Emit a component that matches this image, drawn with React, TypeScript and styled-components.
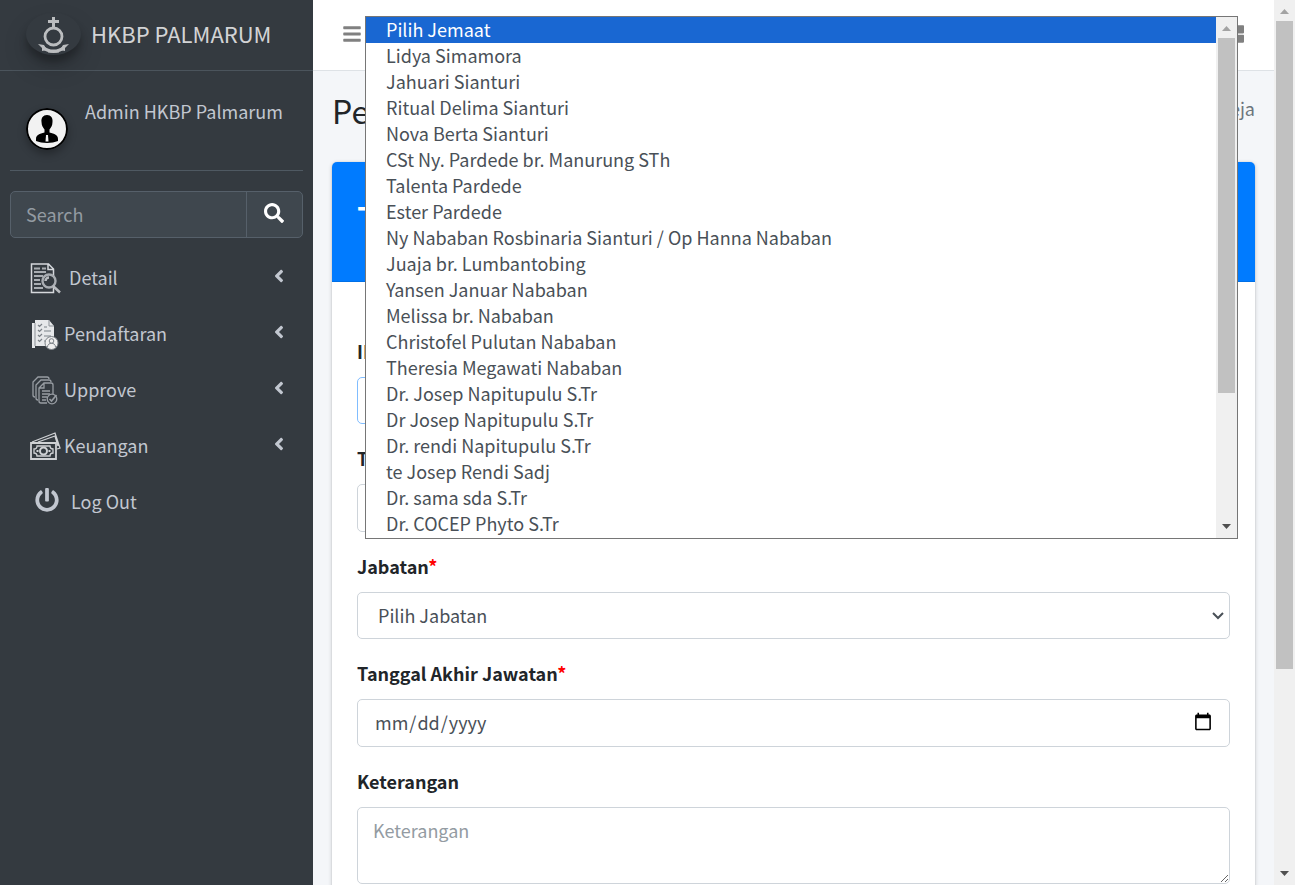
import React from "react";
import styled, { createGlobalStyle } from "styled-components";
import { FaSearch, FaPowerOff, FaBars, FaThLarge, FaAngleLeft } from "react-icons/fa";

const Global = createGlobalStyle`
  *, *::before, *::after { box-sizing: border-box; }
  body { margin: 0; overflow: hidden; }
  body, input, select, textarea, button {
    font-family: "Noto Sans CJK SC", "Noto Sans", sans-serif;
    font-size: 18px;
    line-height: 28px;
    color: #212529;
  }
`;

const Shell = styled.div`
  display: grid;
  grid-template-columns: 313px minmax(0, 1fr) 21px;
  grid-template-rows: minmax(0, 1fr);
  height: 100vh;
  overflow: hidden;
`;

const Sidebar = styled.aside`
  background: #343a40;
  color: #c2c7d0;
`;

const Brand = styled.a`
  display: flex;
  align-items: center;
  gap: 10px;
  height: 71px;
  padding: 0 0 2px 26px;
  border-bottom: 1px solid #4b545c;
  color: rgba(255, 255, 255, 0.8);
  font-size: 22px;
  font-weight: 400;
  text-decoration: none;
`;

const BrandName = styled.span`
  padding-bottom: 2px;
`;

const BrandLogo = styled.svg`
  width: 55px;
  height: 42px;
  border-radius: 50%;
  box-shadow: 0 12px 25px rgba(0, 0, 0, 0.19), 0 7px 7px rgba(0, 0, 0, 0.23);
`;

const SidebarBody = styled.div`
  padding: 0 10px;
`;

const UserPanel = styled.div`
  display: flex;
  gap: 17px;
  height: 100px;
  padding: 26px 0 0 16px;
  border-bottom: 1px solid #4f5962;
`;

const Avatar = styled.svg`
  width: 42px;
  height: 42px;
  margin-top: 11px;
  border-radius: 50%;
  box-shadow: 0 4px 8px rgba(0, 0, 0, 0.3);
`;

const UserName = styled.a`
  color: #c2c7d0;
  text-decoration: none;
`;

const SearchForm = styled.form`
  display: flex;
  height: 47px;
  margin: 20px 0 12px;
  border: 1px solid #56606a;
  border-radius: 5px;
  background: #3f474e;
`;

const SearchInput = styled.input`
  flex: 1;
  min-width: 0;
  padding: 0 15px 2px;
  border: 0;
  background: transparent;
  color: #fff;
  &::placeholder { color: #939ba2; opacity: 1; }
`;

const SearchButton = styled.button`
  width: 56px;
  padding: 0 2px 4px 0;
  border: 0;
  border-left: 1px solid #56606a;
  background: transparent;
  color: #fff;
  svg { display: block; margin: 0 auto; }
`;

const NavItem = styled.a<{ $gap?: number }>`
  display: flex;
  align-items: center;
  gap: ${(p) => p.$gap ?? 3}px;
  height: 56px;
  padding: 0 14px 0 20px;
  color: #c2c7d0;
  text-decoration: none;
`;

const NavText = styled.span`
  padding-bottom: 3px;
`;

const NavIcon = styled.svg`
  width: 31px;
  height: 31px;
`;

const PowerIcon = styled(FaPowerOff)`
  width: 24px;
  height: 24px;
  margin: 0 4px 5px 5px;
`;

const NavArrow = styled(FaAngleLeft)`
  margin: 0 0 5px auto;
`;

const Main = styled.main`
  overflow: hidden;
  background: #f4f6f9;
`;

const Topbar = styled.header`
  display: flex;
  align-items: center;
  justify-content: space-between;
  height: 71px;
  padding: 0 30px 2px 29px;
  border-bottom: 1px solid #dee2e6;
  background: #fff;
`;

const IconButton = styled.button`
  display: flex;
  padding: 0;
  border: 0;
  background: transparent;
  color: #808080;
`;

const PageHead = styled.div`
  display: flex;
  justify-content: space-between;
  padding: 19px 19px 0;
  height: 91px;
`;

const Title = styled.h1`
  margin: 0;
  font-size: 32px;
  line-height: 40px;
  font-weight: 400;
`;

const Crumb = styled.span`
  padding-top: 4px;
  color: #6c757d;
`;

const Card = styled.section`
  margin: 0 19px;
  border-radius: 5px;
  background: #fff;
  box-shadow: 0 0 1px rgba(0, 0, 0, 0.2), 0 1px 4px rgba(0, 0, 0, 0.2);
`;

const CardHead = styled.header`
  height: 120px;
  padding: 32px 25px 0;
  border-bottom: 1px solid #006fe6;
  border-radius: 5px 5px 0 0;
  background: #007bff;
  color: #fff;
`;

const CardTitle = styled.h2`
  margin: 0;
  font-size: 36px;
  line-height: 48px;
  font-weight: 500;
`;

const Form = styled.form`
  display: flex;
  flex-direction: column;
  gap: 20px;
  padding: 55px 25px 25px;
`;

const Field = styled.div`
  position: relative;
`;

const Label = styled.label`
  display: block;
  margin-bottom: 12px;
  font-weight: 700;
`;

const Star = styled.span`
  color: #f00;
`;

const Control = styled.input`
  display: block;
  width: 100%;
  height: 48px;
  padding: 0 15px 2px 16px;
  border: 1px solid #ced4da;
  border-radius: 5px;
  background: #fff;
  color: #495057;
  &::placeholder { color: #939ba2; opacity: 1; }
  &::-webkit-calendar-picker-indicator { width: 20px; height: 20px; padding: 1px; }
`;

const Select = styled.select<{ $focus?: boolean }>`
  display: block;
  width: 100%;
  height: 47px;
  padding: 0 40px 1px 20px;
  border: 1px solid ${(p) => (p.$focus ? "#80bdff" : "#ced4da")};
  border-radius: 5px;
  background: #fff;
  color: #495057;
  appearance: none;
`;

const Chevron = styled.svg`
  position: absolute;
  right: 6px;
  bottom: 18px;
  width: 12px;
  height: 10px;
  pointer-events: none;
`;

const TextArea = styled(Control)`
  height: 77px;
  padding: 8px 15px;
`;

const Popup = styled.div`
  position: absolute;
  z-index: 2;
  left: 8px;
  right: -8px;
  bottom: -115px;
  display: flex;
  border: 1px solid #767676;
  background: #fff;
`;

const Options = styled.ul`
  flex: 1;
  margin: 0;
  padding: 0 0 1px;
  list-style: none;
`;

const Option = styled.li<{ $active: boolean }>`
  height: 26px;
  padding-left: 20px;
  line-height: 24px;
  color: ${(p) => (p.$active ? "#fff" : "#495057")};
  background: ${(p) => (p.$active ? "#1967d2" : "transparent")};
`;

const Track = styled.div`
  display: flex;
  flex-direction: column;
  width: 21px;
  background: #f0f0f0;
`;

const Thumb = styled.div<{ $share: number }>`
  flex: ${(p) => p.$share} 0 0;
  margin: 0 2px;
  background: #c1c1c1;
`;

const Rest = styled.div<{ $share: number }>`
  flex: ${(p) => p.$share} 0 0;
`;

const Arrow = styled.svg`
  display: block;
  width: 21px;
  height: 21px;
`;

function Scrollbar({ thumb, rest }: { thumb: number; rest: number }) {
  return (
    <Track aria-hidden="true">
      <Arrow viewBox="0 0 21 21"><path d="M6 14h9l-4.500-5z" fill="#a3a3a3" /></Arrow>
      <Thumb $share={thumb} />
      <Rest $share={rest} />
      <Arrow viewBox="0 0 21 21"><path d="M6 7h9l-4.500 5z" fill="#505050" /></Arrow>
    </Track>
  );
}

const members = [
  "Pilih Jemaat", "Lidya Simamora", "Jahuari Sianturi", "Ritual Delima Sianturi",
  "Nova Berta Sianturi", "CSt Ny. Pardede br. Manurung STh", "Talenta Pardede",
  "Ester Pardede", "Ny Nababan Rosbinaria Sianturi / Op Hanna Nababan",
  "Juaja br. Lumbantobing", "Yansen Januar Nababan", "Melissa br. Nababan",
  "Christofel Pulutan Nababan", "Theresia Megawati Nababan",
  "Dr. Josep Napitupulu S.Tr", "Dr Josep Napitupulu S.Tr",
  "Dr. rendi Napitupulu S.Tr", "te Josep Rendi Sadj", "Dr. sama sda S.Tr",
  "Dr. COCEP Phyto S.Tr",
];

const DetailIcon = () => (
  <NavIcon viewBox="0 0 31 31" fill="none" stroke="#d5d8dc" strokeWidth="1.500">
    <path d="M1.500 1h17l5 5v23.500h-22zM18 1v5.500h5.500" />
    <path d="M4 5.500h6M12 5.500h4M4 9h12M4 13h9M4 17h6M4 21h7M4 25h9" stroke="#a9adb2" strokeWidth="1.800" />
    <circle cx="19" cy="18" r="6.500" fill="#343a40" stroke="#a9adb2" strokeWidth="2.400" />
    <path d="M15.500 18a3.500 3.500 0 0 1 3.500-3.500M23 23l7 6.500" stroke="#b9bcc0" strokeWidth="2.500" />
  </NavIcon>
);

const RegisterIcon = () => (
  <NavIcon viewBox="0 0 31 31">
    <path d="M2 4h3V1h14l5 6v20H5v2H2z" fill="#e6e8ea" />
    <path d="M5 4v23M19 1v6h5" fill="none" stroke="#8b9096" />
    <path d="m8 6 1.500 1.500L12 5M8 11l1.500 1.500L12 10M8 16l1.500 1.500L12 15M8 21l1.500 1.500L12 20M14 8h3M14 12h7M14 17h7M14 22h2" fill="none" stroke="#7b8187" strokeWidth="1.200" />
    <circle cx="21.500" cy="24" r="6.500" fill="#eee" stroke="#7d8389" />
    <circle cx="21.500" cy="22" r="2.300" fill="none" stroke="#7b8187" />
    <path d="M17.500 28c0-5 8-5 8 0" fill="none" stroke="#7b8187" />
  </NavIcon>
);

const ApproveIcon = () => (
  <NavIcon viewBox="0 0 31 31" fill="none" stroke="#989da3" strokeWidth="1.300">
    <path d="M5 22c-2 0-2-1-2-2V7l5-5h9c1 0 2 1 2 2M8 25c-2 0-2-1-2-2V10l5-5h8c2 0 2 1 2 2M17 28h-6c-2 0-2-1-2-2V13l5-5h7c2 0 2 1 2 2v9M14 8v5H9" />
    <path d="M12 16h8M12 19h8M12 22h5M12 25h4" />
    <circle cx="22" cy="24" r="4.800" />
    <path d="m19.500 24 2 2 5-6" strokeWidth="1.600" />
  </NavIcon>
);

const MoneyIcon = () => (
  <NavIcon viewBox="0 0 31 31" fill="none" stroke="#cfd1d4" strokeWidth="1.300">
    <path d="M2 11 25 2l5 15-3 1M8 11l17-6 3 10" />
    <path d="M1 12h25v16H1z" strokeWidth="1.800" />
    <path d="M7 15h13c0 2 1 3 3 3v4c-2 0-3 1-3 3H7c0-2-1-3-3-3v-4c2 0 3-1 3-3z" />
    <circle cx="13.500" cy="20" r="3.500" strokeWidth="2" />
    <path d="M6.500 20h2M18.500 20h2" strokeWidth="2" />
  </NavIcon>
);

const SelectChevron = () => (
  <Chevron viewBox="0 0 12 10" fill="none" stroke="#495057" strokeWidth="2">
    <path d="m1 2 5 5 5-5" />
  </Chevron>
);

export default function App() {
  return (
    <>
      <Global />
      <Shell>
        <Sidebar>
          <Brand href="#">
            <BrandLogo viewBox="0 0 55 42" fill="none" stroke="#bbbdbf">
              <path d="M27.500 4v10M22 8.500h11" strokeWidth="3" />
              <circle cx="27.500" cy="23.500" r="8.500" strokeWidth="2.800" />
              <path d="M17 34.500c6 5 15 5 21 0" strokeWidth="3.500" />
              <path d="m12 31 6 1 3 5-5 1 0-3zM43 31l-6 1-3 5 5 1 0-3z" fill="#bbbdbf" stroke="none" />
              <path d="M22 38.500h11" strokeWidth="2" />
            </BrandLogo>
            <BrandName>HKBP PALMARUM</BrandName>
          </Brand>
          <SidebarBody>
            <UserPanel>
              <Avatar viewBox="0 0 42 42">
                <circle cx="21" cy="21" r="20" fill="#f2f2f2" stroke="#000" strokeWidth="2" />
                <path d="M21 7c-4 0-6 3-5.500 7 0 4 2 6 3 7.500v3c-5 1-8.500 2.500-8.500 6.500v2c6 2.500 16 2.500 22 0v-2c0-4-3.500-5.500-8.500-6.500v-3c1-1.500 3-3.500 3-7.500C27 10 25 7 21 7z" />
                <path d="m20 27-.5 6.500h3L22 27z" fill="#f2f2f2" />
              </Avatar>
              <UserName href="#">Admin HKBP Palmarum</UserName>
            </UserPanel>
            <SearchForm>
              <SearchInput type="search" placeholder="Search" aria-label="Search" />
              <SearchButton type="button" aria-label="Search"><FaSearch size={20} /></SearchButton>
            </SearchForm>
            <nav>
              <NavItem href="#" $gap={8}><DetailIcon /><NavText>Detail</NavText><NavArrow size={20} /></NavItem>
              <NavItem href="#"><RegisterIcon /><NavText>Pendaftaran</NavText><NavArrow size={20} /></NavItem>
              <NavItem href="#"><ApproveIcon /><NavText>Upprove</NavText><NavArrow size={20} /></NavItem>
              <NavItem href="#"><MoneyIcon /><NavText>Keuangan</NavText><NavArrow size={20} /></NavItem>
              <NavItem href="#" $gap={8}><PowerIcon /><NavText>Log Out</NavText></NavItem>
            </nav>
          </SidebarBody>
        </Sidebar>
        <Main>
          <Topbar>
            <IconButton type="button" aria-label="Menu"><FaBars size={20} /></IconButton>
            <IconButton type="button" aria-label="Panel"><FaThLarge size={20} /></IconButton>
          </Topbar>
          <PageHead>
            <Title>Pelayan</Title>
            <Crumb>Gereja</Crumb>
          </PageHead>
          <Card>
            <CardHead><CardTitle>Tambah</CardTitle></CardHead>
            <Form>
              <Field>
                <Label htmlFor="jemaat">ID Jemaat<Star>*</Star></Label>
                <Select id="jemaat" $focus><option>Pilih Jemaat</option></Select>
                <SelectChevron />
                <Popup>
                  <Options role="listbox" aria-label="Jemaat">
                    {members.map((name, i) => (
                      <Option key={name} role="option" aria-selected={i === 0} $active={i === 0}>{name}</Option>
                    ))}
                  </Options>
                  <Scrollbar thumb={355} rest={124} />
                </Popup>
              </Field>
              <Field>
                <Label htmlFor="mulai">Tanggal Jawatan<Star>*</Star></Label>
                <Control id="mulai" type="date" />
              </Field>
              <Field>
                <Label htmlFor="jabatan">Jabatan<Star>*</Star></Label>
                <Select id="jabatan"><option>Pilih Jabatan</option></Select>
                <SelectChevron />
              </Field>
              <Field>
                <Label htmlFor="akhir">Tanggal Akhir Jawatan<Star>*</Star></Label>
                <Control id="akhir" type="date" />
              </Field>
              <Field>
                <Label htmlFor="keterangan">Keterangan</Label>
                <TextArea as="textarea" id="keterangan" placeholder="Keterangan" />
              </Field>
            </Form>
          </Card>
        </Main>
        <Scrollbar thumb={648} rest={195} />
      </Shell>
    </>
  );
}
